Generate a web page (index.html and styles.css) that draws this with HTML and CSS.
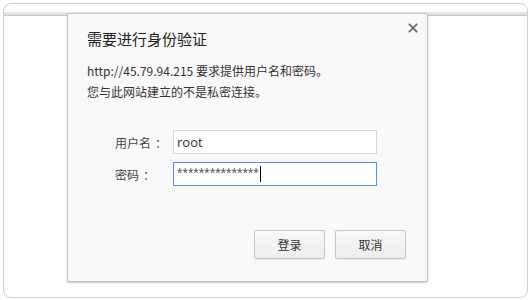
FILE: index.html
```html
<!DOCTYPE html>
<html lang="zh-CN">
<head>
<meta charset="utf-8">
<title>需要进行身份验证</title>
<link rel="stylesheet" href="styles.css">
</head>
<body>
<div class="page">
  <div class="frame">
    <div class="toolbar"></div>
    <div class="band"></div>
    <div class="content"></div>
    <div class="dialog">
      <div class="close" aria-label="关闭">
        <svg width="16" height="16" viewBox="0 0 16 16"><path d="M4.5 4.5 L11.5 11.5 M11.5 4.5 L4.5 11.5" stroke="#707070" stroke-width="1.8" stroke-linecap="square" fill="none"/></svg>
      </div>
      <div class="title">需要进行身份验证</div>
      <div class="message">
        <div>http://45.79.94.215 要求提供用户名和密码。</div>
        <div>您与此网站建立的不是私密连接。</div>
      </div>
      <div class="form">
        <div class="label">用户名<span class="colon">：</span></div>
        <div class="field">root</div>
        <div class="label">密码<span class="colon">：</span></div>
        <div class="field focused"><span class="stars">***************</span><span class="caret"></span></div>
      </div>
      <div class="buttons">
        <div class="btn">登录</div>
        <div class="btn">取消</div>
      </div>
    </div>
  </div>
</div>
</body>
</html>
```
FILE: styles.css
```css
html, body {
  margin: 0;
  padding: 0;
  background: #ffffff;
}
.page {
  padding: 3px;
  width: 530px;
  height: 300px;
  box-sizing: border-box;
}
.frame {
  position: relative;
  width: 525px;
  height: 295px;
  box-sizing: border-box;
  border: 1px solid #cfcfd7;
  border-radius: 8px;
  background: #ffffff;
  display: flex;
  flex-direction: column;
  font-family: "Noto Sans CJK SC", "Open Sans", sans-serif;
}
.toolbar {
  height: 8px;
}
.band {
  height: 3px;
  background: linear-gradient(#ebebeb, #dcdcdc);
  border-bottom: 1px solid #c9c9c9;
}
.content {
  flex: 1;
}
.dialog {
  position: absolute;
  left: 63px;
  top: 9px;
  width: 361px;
  height: 269px;
  box-sizing: border-box;
  background: #f9f9f9;
  border: 1px solid #c4c4c4;
  border-radius: 2px;
  box-shadow: 0 1px 2px rgba(0, 0, 0, 0.22);
  padding: 15px 21px 22px 19px;
  display: flex;
  flex-direction: column;
  color: #333333;
}
.close {
  position: absolute;
  top: 6px;
  right: 6px;
  width: 16px;
  height: 16px;
}
.close svg {
  display: block;
}
.title {
  font-size: 15px;
  line-height: 20px;
  color: #222222;
}
.message {
  margin-top: 11px;
  font-size: 12px;
  line-height: 21px;
  color: #333333;
}
.form {
  margin-top: 28px;
  margin-left: 28px;
  display: grid;
  grid-template-columns: 58px 204px;
  row-gap: 8px;
  align-items: center;
}
.label {
  font-size: 12px;
  color: #444444;
}
.colon {
  margin-left: 4px;
}
.field {
  height: 24px;
  box-sizing: border-box;
  border: 1px solid #d9d9d9;
  background: #ffffff;
  padding: 0 3px;
  display: flex;
  align-items: center;
  font-family: "Open Sans", sans-serif;
  font-size: 13px;
  color: #333333;
}
.field.focused {
  border-color: #4d90fe;
}
.stars {
  font-family: "Liberation Sans", sans-serif;
  font-size: 14px;
  color: #555555;
  position: relative;
  top: -1px;
}
.caret {
  display: inline-block;
  width: 1px;
  height: 16px;
  background: #000000;
  margin-left: 1px;
}
.buttons {
  margin-top: auto;
  display: flex;
  justify-content: flex-end;
  gap: 10px;
}
.btn {
  width: 71px;
  height: 29px;
  box-sizing: border-box;
  border: 1px solid #c6c6c6;
  border-radius: 2px;
  background: linear-gradient(#f8f8f8, #ededed);
  box-shadow: 0 1px 0 rgba(0, 0, 0, 0.06);
  display: flex;
  align-items: center;
  justify-content: center;
  font-size: 12px;
  color: #333333;
}
```
